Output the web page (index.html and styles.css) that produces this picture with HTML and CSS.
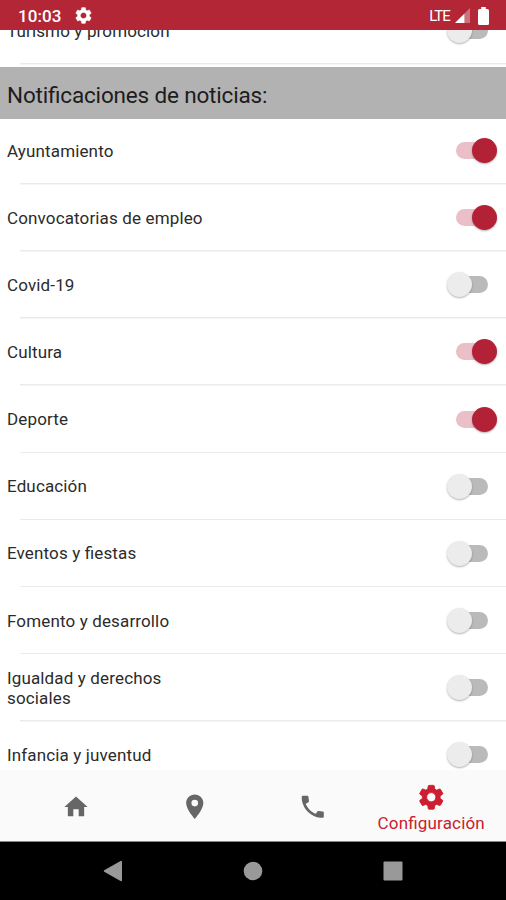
FILE: index.html
```html
<!DOCTYPE html>
<html lang="es">
<head>
<meta charset="utf-8">
<meta name="viewport" content="width=device-width, initial-scale=1">
<title>Configuración</title>
<link rel="stylesheet" href="styles.css">
</head>
<body>
<svg width="0" height="0" class="defs">
  <symbol id="gear" viewBox="0 0 24 24"><path d="M19.43 12.98c.04-.32.07-.64.07-.98s-.03-.66-.07-.98l2.11-1.65c.19-.15.24-.42.12-.64l-2-3.46c-.12-.22-.39-.3-.61-.22l-2.49 1c-.52-.4-1.08-.73-1.69-.98l-.38-2.65C14.46 2.18 14.25 2 14 2h-4c-.25 0-.46.18-.49.42l-.38 2.65c-.61.25-1.17.59-1.69.98l-2.49-1c-.23-.09-.49 0-.61.22l-2 3.46c-.13.22-.07.49.12.64l2.11 1.65c-.04.32-.07.65-.07.98s.03.66.07.98l-2.11 1.65c-.19.15-.24.42-.12.64l2 3.46c.12.22.39.3.61.22l2.49-1c.52.4 1.08.73 1.69.98l.38 2.65c.03.24.24.42.49.42h4c.25 0 .46-.18.49-.42l.38-2.65c.61-.25 1.17-.59 1.69-.98l2.49 1c.23.09.49 0 .61-.22l2-3.46c.12-.22.07-.49-.12-.64l-2.11-1.65zM12 15.9c-2.15 0-3.9-1.75-3.9-3.9s1.75-3.9 3.9-3.9 3.9 1.75 3.9 3.9-1.75 3.9-3.9 3.9z"/></symbol>
</svg>
<div class="screen">
  <header class="status">
    <span class="clock">10:03</span>
    <svg class="status-gear"><use href="#gear"/></svg>
    <span class="lte">LTE</span>
    <svg class="signal" viewBox="0 0 16 16"><path d="M16 0v16H0z" fill="#fff" opacity=".35"/><path d="M10 6v10H0z" fill="#fff"/></svg>
    <svg class="battery" viewBox="0 0 11 18"><path d="M3.2 0h4.600v2H9.500Q11 2 11 3.500v13Q11 18 9.500 18h-8Q0 18 0 16.500v-13Q0 2 1.500 2h1.700z" fill="#fff"/></svg>
  </header>
  <main class="content">
    <div class="row cut"><span class="name">Turismo y promoción</span><span class="switch"></span></div>
    <h1 class="section">Notificaciones de noticias:</h1>
    <div class="row"><span class="name">Ayuntamiento</span><span class="switch on"></span></div>
    <div class="row"><span class="name">Convocatorias de empleo</span><span class="switch on"></span></div>
    <div class="row"><span class="name">Covid-19</span><span class="switch"></span></div>
    <div class="row"><span class="name">Cultura</span><span class="switch on"></span></div>
    <div class="row"><span class="name">Deporte</span><span class="switch on"></span></div>
    <div class="row"><span class="name">Educación</span><span class="switch"></span></div>
    <div class="row"><span class="name">Eventos y fiestas</span><span class="switch"></span></div>
    <div class="row"><span class="name">Fomento y desarrollo</span><span class="switch"></span></div>
    <div class="row"><span class="name">Igualdad y derechos<br>sociales</span><span class="switch"></span></div>
    <div class="row"><span class="name">Infancia y juventud</span><span class="switch"></span></div>
  </main>
  <nav class="tabs">
    <a class="tab"><svg class="home" viewBox="0 0 24 24"><path d="M9.700 20v-6h4.600v6H19v-8h3L12 3 2 12h3v8z"/></svg></a>
    <a class="tab"><svg viewBox="0 0 24 24"><path d="M12 2C8.130 2 5 5.130 5 9c0 5.250 7 13 7 13s7-7.750 7-13c0-3.870-3.130-7-7-7zm0 9.700a2.700 2.700 0 1 1 0-5.400 2.700 2.700 0 0 1 0 5.400z"/></svg></a>
    <a class="tab"><svg viewBox="0 0 24 24"><path d="M4 3h3.600q.8 0 .9.800l.4 3.600q.1.900-.7 1.200L6.300 9.500C7.700 13.200 11 16.500 14.600 17.700l.9-1.600q.4-.7 1.200-.6l3.500.4q.8.100.8.900V20q0 1-1 1C10.700 21 3 13.300 3 4q0-1 1-1z"/></svg></a>
    <a class="tab active"><svg><use href="#gear"/></svg><span class="label">Configuración</span></a>
  </nav>
  <footer class="system">
    <svg viewBox="0 0 20 22"><path d="M1.200 10.300 18 .8q1 0 1 1v18.400q0 1-1 1L1.200 11.700q-.9-.7 0-1.400z"/></svg>
    <svg viewBox="0 0 20 22"><circle cx="10" cy="11" r="9.300"/></svg>
    <svg viewBox="0 0 20 22"><rect x=".5" y="1.500" width="19" height="19" rx="1"/></svg>
  </footer>
</div>
</body>
</html>
```
FILE: styles.css
```css
* { box-sizing: border-box; }
body { margin: 0; background: #fff; font-family: Roboto, sans-serif; color: #2b2b2b; font-feature-settings: "liga" 1; }
.defs { display: block; height: 0; }
.screen { width: 506px; height: 900px; display: flex; flex-direction: column; overflow: hidden; }

.status { height: 29.500px; flex: none; background: #b32636; color: #fff; display: flex; align-items: center; padding: 2px 17px 0 18px; }
.clock { font-size: 17px; font-weight: 500; letter-spacing: .1px; }
.status-gear { width: 19px; height: 19px; fill: #fff; stroke: #fff; stroke-width: .5px; margin-left: 12.500px; margin-right: auto; }
.lte { font-size: 15px; letter-spacing: -.9px; margin-right: 5px; }
.signal { width: 15px; height: 15px; margin-right: 8px; }
.battery { width: 11px; height: 18px; }

.content { flex: 1; min-height: 0; overflow: hidden; }
.row { height: 67.120px; padding: 0 9.500px 1px 7px; display: flex; align-items: center; justify-content: space-between; background: linear-gradient(#ebebeb, #ebebeb) 20px 100% / 100% 1.500px no-repeat; }
.cut { margin-top: -32px; }
.name { font-size: 17px; line-height: 20px; letter-spacing: .14px; padding-top: .5px; }
.section { height: 52px; margin: 2.500px 0 -1.600px; padding: 4px 7px 0; background: #b2b2b2; display: flex; align-items: center; font-size: 22.500px; font-weight: 400; letter-spacing: -.17px; color: #1c1c1c; }

.switch { width: 50px; height: 25px; display: flex; align-items: center; position: relative; }
.switch::before { content: ""; width: 32px; height: 17px; margin-left: 9px; border-radius: 9px; background: #bababa; }
.switch::after { content: ""; position: absolute; left: 0; top: 0; width: 25px; height: 25px; border-radius: 50%; background: #ececec; box-shadow: 0 1px 2px rgba(0, 0, 0, .3); }
.switch.on::before { background: #eabfc7; }
.switch.on::after { left: 25px; background: #b32136; }

.tabs { height: 72px; flex: none; background: #fafafa; border-bottom: 1px solid #888; display: grid; grid-template-columns: repeat(4, 118.500px); padding-left: 16.500px; }
.tab { display: flex; flex-direction: column; align-items: center; justify-content: center; padding-top: 2px; fill: #666; }
.tab svg { width: 29.500px; height: 29.500px; }
.tab .home { width: 28px; height: 28px; }
.tab.active { color: #c8202f; fill: #cc1e30; stroke: #cc1e30; stroke-width: .8px; justify-content: flex-start; padding-top: 12.500px; }
.tab.active svg { width: 28.500px; height: 28.500px; }
.label { font-size: 17px; line-height: 20px; margin-top: 1.500px; letter-spacing: .17px; }

.system { height: 58px; flex: none; background: #000; display: flex; justify-content: center; gap: 120px; padding-top: 18px; fill: #999; }
.system svg { width: 20px; height: 22px; }
```
